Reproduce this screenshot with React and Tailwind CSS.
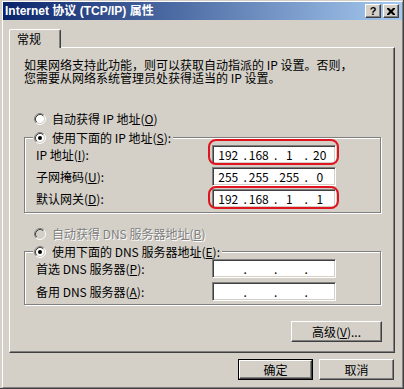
import React from 'react';

const cjk = "font-['Noto_Sans_CJK_SC','Liberation_Sans',sans-serif]";
const raised = "border border-t-white border-l-white border-r-[#404040] border-b-[#404040] shadow-[inset_-1px_-1px_0_#808080]";
const sunken = "border border-t-[#808080] border-l-[#808080] border-r-white border-b-white shadow-[inset_1px_1px_0_#404040,inset_-1px_-1px_0_#D4D0C8]";
const etched = "border border-[#808080] shadow-[inset_1px_1px_0_white,1px_1px_0_white]";
const disabledText = "text-[#808080] [text-shadow:1px_1px_0_white]";

const Radio = ({ checked, disabled }) => (
    <svg width="12" height="12" viewBox="0 0 12 12" className="shrink-0">
        <circle cx="6" cy="6" r="4" fill={disabled ? '#D4D0C8' : 'white'} />
        <path d="M2.11 9.89A5.5 5.5 0 0 1 9.89 2.11" stroke="#808080" fill="none" />
        <path d="M9.89 2.11A5.5 5.5 0 0 1 2.11 9.89" stroke="white" fill="none" />
        <path d="M2.82 9.18A4.5 4.5 0 0 1 9.18 2.82" stroke="#404040" fill="none" />
        <path d="M9.18 2.82A4.5 4.5 0 0 1 2.82 9.18" stroke="#D4D0C8" fill="none" />
        {checked && <circle cx="6" cy="6" r="2" fill={disabled ? '#808080' : 'black'} />}
    </svg>
);

// IP address control: four fields separated by dots
const IpField = ({ parts = ['', '', '', ''] }) => (
    <div className={`w-[124px] h-[19px] bg-white flex items-center text-black ${sunken}`}>
        {parts.map((p, i) => (
            <React.Fragment key={i}>
                {i > 0 && <span className="w-0 overflow-visible leading-[13px]">.</span>}
                <span className="flex-1 text-center leading-[13px]">{p}</span>
            </React.Fragment>
        ))}
    </div>
);

const Row = ({ label, children }) => (
    <div className="flex items-center h-[19px]">
        <div className="w-[187px] pl-[11px] leading-[13px]">{label}</div>
        {children}
    </div>
);

const GroupLabel = ({ children }) => (
    <div className="ml-[8px] -mt-[7px] self-start h-[13px] flex items-center gap-[6px] pl-[1px] pr-[2px] bg-[#D4D0C8]">
        <Radio checked />
        <span className="leading-[13px]">{children}</span>
    </div>
);

const Button = ({ children, isDefault, className = '' }) => (
    <div className={`${isDefault ? 'border border-black' : ''} ${className}`}>
        <div className={`h-full flex items-center justify-center leading-[13px] ${raised}`}>{children}</div>
    </div>
);

const App = () => {
    return (
        <div className={`w-[404px] h-[389px] bg-[#D4D0C8] pt-[1px] pl-[2px] border-r border-b border-[#404040] text-[12px] text-black ${cjk}`}>
            <div className="h-full flex flex-col border-t border-l border-white border-r border-b border-r-[#808080] border-b-[#808080]">
                {/* title bar */}
                <div className="h-[18px] flex items-center bg-linear-to-r/srgb from-[#0A246A] to-[#A6CAF0] pl-[2px] pr-[3px]">
                    <span className="text-white font-bold text-[12px] leading-[14px] font-['Liberation_Sans','Noto_Sans_CJK_SC',sans-serif]">
                        Internet 协议 (TCP/IP) 属性
                    </span>
                    <div className="ml-auto flex gap-[2px]">
                        <div className={`w-[16px] h-[14px] bg-[#D4D0C8] flex items-center justify-center ${raised}`}>
                            <span className="font-bold text-[11px] leading-[11px] font-['Liberation_Sans',sans-serif]">?</span>
                        </div>
                        <div className={`w-[16px] h-[14px] bg-[#D4D0C8] flex items-center justify-center ${raised}`}>
                            <svg width="8" height="7" viewBox="0 0 8 7">
                                <path d="M0 0h2l2 2 2-2h2v1l-2.5 2.5L8 6v1H6L4 5 2 7H0V6l2.5-2.5L0 1z" fill="black" />
                            </svg>
                        </div>
                    </div>
                </div>

                {/* tab */}
                <div className="ml-[6px] mt-[9px] w-[52px] h-[19px] -mb-[1px] z-10 flex bg-[#D4D0C8] border-t border-l border-white border-r border-r-[#404040] rounded-tl-[2px] rounded-tr-[2px] shadow-[inset_-1px_0_0_#808080]">
                    <span className="pl-[7px] pt-[2px] leading-[13px]">常规</span>
                </div>

                {/* tab panel */}
                <div className="ml-[6px] w-[386px] h-[306px] flex flex-col border-t border-l border-white border-r border-b border-r-[#404040] border-b-[#404040] shadow-[inset_-1px_-1px_0_#808080] pl-[14px] pt-[10px]">
                    <div className="leading-[13px]">
                        <div>如果网络支持此功能，则可以获取自动指派的 IP 设置。否则，</div>
                        <div>您需要从网络系统管理员处获得适当的 IP 设置。</div>
                    </div>

                    <div className="mt-[28px] ml-[10px] h-[13px] flex items-center gap-[6px]">
                        <Radio />
                        <span className="leading-[13px]">自动获得 IP 地址(<u>O</u>)</span>
                    </div>

                    <div className={`mt-[12px] w-[357px] h-[76px] flex flex-col ${etched}`}>
                        <GroupLabel>使用下面的 IP 地址(<u>S</u>):</GroupLabel>
                        <div className="mt-[1px] flex flex-col gap-[3px]">
                            <Row label={<>IP 地址(<u>I</u>):</>}>
                                <div className="relative">
                                    <IpField parts={['192', '168', '1', '20']} />
                                    <div className="absolute -left-[4px] -right-[3px] -top-[6px] -bottom-[1px] border-2 border-[#E0141E] rounded-[8px]" />
                                </div>
                            </Row>
                            <Row label={<>子网掩码(<u>U</u>):</>}>
                                <IpField parts={['255', '255', '255', '0']} />
                            </Row>
                            <Row label={<>默认网关(<u>D</u>):</>}>
                                <div className="relative">
                                    <IpField parts={['192', '168', '1', '1']} />
                                    <div className="absolute -left-[4px] -right-[3px] -top-[3px] -bottom-[1px] border-2 border-[#E0141E] rounded-[8px]" />
                                </div>
                            </Row>
                        </div>
                    </div>

                    <div className="mt-[14px] ml-[10px] h-[13px] flex items-center gap-[6px]">
                        <Radio disabled />
                        <span className={`leading-[13px] ${disabledText}`}>自动获得 DNS 服务器地址(<u>B</u>)</span>
                    </div>

                    <div className={`mt-[11px] w-[357px] h-[54px] flex flex-col ${etched}`}>
                        <GroupLabel>使用下面的 DNS 服务器地址(<u>E</u>):</GroupLabel>
                        <div className="mt-[1px] flex flex-col gap-[4px]">
                            <Row label={<>首选 DNS 服务器(<u>P</u>):</>}>
                                <IpField />
                            </Row>
                            <Row label={<>备用 DNS 服务器(<u>A</u>):</>}>
                                <IpField />
                            </Row>
                        </div>
                    </div>

                    <div className="w-[358px] mt-[16px] flex justify-end">
                        <Button className="w-[91px] h-[21px]">高级(<u>V</u>)...</Button>
                    </div>
                </div>

                {/* dialog buttons */}
                <div className="mt-[6px] ml-[235px] flex gap-[6px]">
                    <Button isDefault className="w-[75px] h-[21px]">确定</Button>
                    <Button className="w-[75px] h-[21px]">取消</Button>
                </div>
            </div>
        </div>
    );
};

export default App;
